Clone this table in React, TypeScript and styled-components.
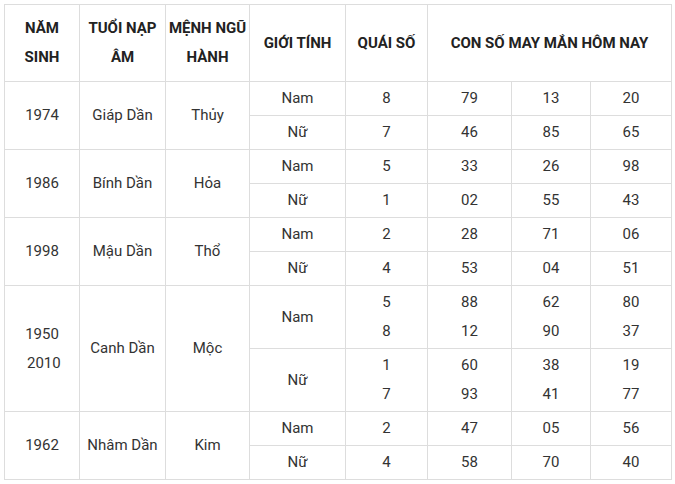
import React from 'react';
import styled, { createGlobalStyle } from 'styled-components';

const GlobalStyle = createGlobalStyle`
  html, body {
    margin: 0;
    padding: 0;
    background: #fff;
  }
  body {
    font-family: Roboto, "Liberation Sans", Arial, sans-serif;
  }
`;

const Page = styled.div`
  padding: 4px;
`;

const Table = styled.table`
  width: 667px;
  table-layout: fixed;
  border-collapse: collapse;
  font-size: 15px;
  color: #333;
`;

const Col = styled.col<{ $w: number }>`
  width: ${(p) => p.$w}px;
`;

const HeadCell = styled.th`
  border: 1px solid #ddd;
  padding: 9px 0;
  line-height: 29px;
  font-weight: 700;
  color: #222;
  text-align: center;
  vertical-align: middle;
  white-space: nowrap;
`;

const Cell = styled.td<{ $lines?: number }>`
  border: 1px solid #ddd;
  padding: 2px 0;
  height: ${(p) => (p.$lines || 1) * 29}px;
  line-height: 29px;
  text-align: center;
  vertical-align: middle;
  white-space: nowrap;
`;

type Gender = { label: string; qs: string[]; nums: string[][] };
type Row = { years: string[]; tuoi: string; menh: string; genders: Gender[] };

const widths = [75, 86, 84, 96, 82, 84, 79, 81];

const rows: Row[] = [
  {
    years: ['1974'], tuoi: 'Giáp Dần', menh: 'Thủy',
    genders: [
      { label: 'Nam', qs: ['8'], nums: [['79'], ['13'], ['20']] },
      { label: 'Nữ', qs: ['7'], nums: [['46'], ['85'], ['65']] },
    ],
  },
  {
    years: ['1986'], tuoi: 'Bính Dần', menh: 'Hỏa',
    genders: [
      { label: 'Nam', qs: ['5'], nums: [['33'], ['26'], ['98']] },
      { label: 'Nữ', qs: ['1'], nums: [['02'], ['55'], ['43']] },
    ],
  },
  {
    years: ['1998'], tuoi: 'Mậu Dần', menh: 'Thổ',
    genders: [
      { label: 'Nam', qs: ['2'], nums: [['28'], ['71'], ['06']] },
      { label: 'Nữ', qs: ['4'], nums: [['53'], ['04'], ['51']] },
    ],
  },
  {
    years: ['1950', '\u00a02010'], tuoi: 'Canh Dần', menh: 'Mộc',
    genders: [
      { label: 'Nam', qs: ['5', '8'], nums: [['88', '12'], ['62', '90'], ['80', '37']] },
      { label: 'Nữ', qs: ['1', '7'], nums: [['60', '93'], ['38', '41'], ['19', '77']] },
    ],
  },
  {
    years: ['1962'], tuoi: 'Nhâm Dần', menh: 'Kim',
    genders: [
      { label: 'Nam', qs: ['2'], nums: [['47'], ['05'], ['56']] },
      { label: 'Nữ', qs: ['4'], nums: [['58'], ['70'], ['40']] },
    ],
  },
];

const Lines = ({ items }: { items: string[] }) => (
  <>
    {items.map((t, i) => (
      <React.Fragment key={i}>
        {i > 0 && <br />}
        {t}
      </React.Fragment>
    ))}
  </>
);

export default function App() {
  return (
    <Page>
      <GlobalStyle />
      <Table>
        <colgroup>
          {widths.map((w, i) => (
            <Col key={i} $w={w} />
          ))}
        </colgroup>
        <thead>
          <tr>
            <HeadCell>NĂM<br />SINH</HeadCell>
            <HeadCell>TUỔI NẠP<br />ÂM</HeadCell>
            <HeadCell>MỆNH NGŨ<br />HÀNH</HeadCell>
            <HeadCell>GIỚI TÍNH</HeadCell>
            <HeadCell>QUÁI SỐ</HeadCell>
            <HeadCell colSpan={3}>CON SỐ MAY MẮN HÔM NAY</HeadCell>
          </tr>
        </thead>
        <tbody>
          {rows.map((r) =>
            r.genders.map((g, gi) => (
              <tr key={r.tuoi + g.label}>
                {gi === 0 && (
                  <>
                    <Cell rowSpan={2}><Lines items={r.years} /></Cell>
                    <Cell rowSpan={2}>{r.tuoi}</Cell>
                    <Cell rowSpan={2}>{r.menh}</Cell>
                  </>
                )}
                <Cell $lines={g.qs.length}>{g.label}</Cell>
                <Cell $lines={g.qs.length}><Lines items={g.qs} /></Cell>
                {g.nums.map((n, ni) => (
                  <Cell key={ni} $lines={g.qs.length}><Lines items={n} /></Cell>
                ))}
              </tr>
            ))
          )}
        </tbody>
      </Table>
    </Page>
  );
}
